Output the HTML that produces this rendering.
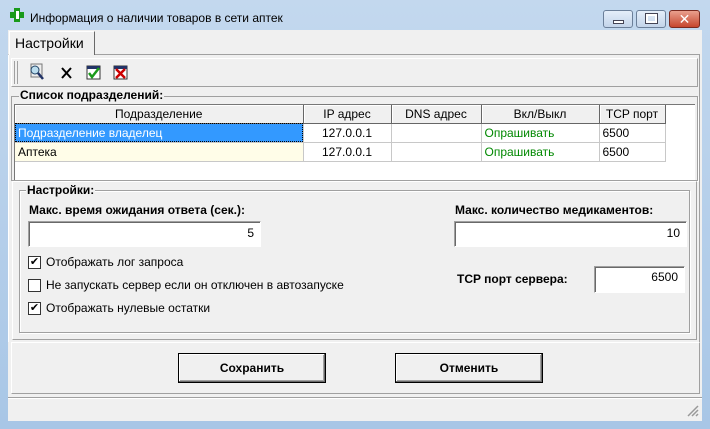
<!DOCTYPE html><html><head><meta charset="utf-8"><style>
*{margin:0;padding:0;box-sizing:border-box}
body{width:710px;height:429px;overflow:hidden;font-family:"Liberation Sans","DejaVu Sans",sans-serif;font-size:12px;color:#000;position:relative;background:linear-gradient(#c3d8ee,#a8c6e6)}
.a{position:absolute}
.b{font-weight:bold}
.in{position:absolute;background:#fff;border:1px solid;border-color:#a0a0a0 #fff #fff #a0a0a0;box-shadow:inset 1px 1px 0 #696969;text-align:right;padding:4px 6px 0 0}
.cb{position:absolute;width:13px;height:13px;background:#fff;border:1px solid #333;font-size:11px;line-height:11px;text-align:center}
.btn{position:absolute;border:1px solid #000;background:#f0f0f0;box-shadow:inset -1px -1px 0 #696969,inset 1px 1px 0 #fff,inset -2px -2px 0 #a0a0a0;font-weight:bold;text-align:center;line-height:28px}
.wb{position:absolute;top:10px;height:18px;border:1px solid #6b7f99;border-radius:3px;background:linear-gradient(#e4eefa,#c3d4ea)}
td{border-right:1px solid #c8c8c8;border-bottom:1px solid #c8c8c8;height:19px;padding:0 3px;white-space:nowrap}
th{font-weight:normal;height:18px;border-right:1px solid #666;border-bottom:1px solid #666;box-shadow:inset 1px 1px 0 #fff;background:#f0f0f0}
</style></head><body>
<div class="a" style="left:10px;top:8px;width:14px;height:14px">
<div class="a" style="left:4px;top:0;width:6px;height:14px;background:#1a9a1a"></div>
<div class="a" style="left:0;top:4px;width:14px;height:6px;background:#1a9a1a"></div>
<div class="a" style="left:6px;top:3px;width:3px;height:8px;background:#fff"></div></div>
<div class="a" style="left:30px;top:11px;font-size:12px">Информация о наличии товаров в сети аптек</div>
<div class="wb" style="left:603px;width:30px"><div class="a" style="left:9px;top:9px;width:11px;height:4px;background:#fff;border:1px solid #445"></div></div>
<div class="wb" style="left:636px;width:30px"><div class="a" style="left:9px;top:3px;width:11px;height:9px;border:2px solid #fff;outline:1px solid #445"></div></div>
<div class="wb" style="left:669px;width:31px;background:linear-gradient(#e9a08e,#c6462e);border-color:#7a2a20;color:#fff;font-weight:bold;text-align:center;font-size:14px;line-height:16px">✕</div>
<div class="a" style="left:8px;top:30px;width:694px;height:391px;background:#f0f0f0"></div>
<div class="a" style="left:8px;top:54px;width:692px;height:288px;border:1px solid #a0a0a0;border-bottom:none;border-left-color:#fff"></div>
<div class="a" style="left:9px;top:31px;width:86px;height:24px;border:1px solid #fff;border-right-color:#696969;border-bottom:none;background:#f0f0f0;font-size:14px;padding:3px 0 0 5px">Настройки</div>
<div class="a" style="left:11px;top:58px;width:687px;height:29px;border:1px solid #fff;border-right-color:#a0a0a0;border-bottom-color:#a0a0a0"></div>
<div class="a" style="left:14px;top:61px;width:4px;height:23px;border-left:1px solid #a0a0a0;border-right:1px solid #a0a0a0"></div>
<svg class="a" style="left:28px;top:63px" width="110" height="20">
<rect x="3" y="1" width="11" height="13" fill="#eee" stroke="#777"/><circle cx="7" cy="7" r="4" fill="#bde" stroke="#246"/><line x1="10" y1="10" x2="15" y2="16" stroke="#236" stroke-width="2.5"/>
<path d="M34 5 L43 15 M43 5 L34 15" stroke="#000" stroke-width="2"/>
<rect x="59" y="3" width="13" height="13" fill="#fff" stroke="#333"/><rect x="59" y="3" width="13" height="3" fill="#236"/><path d="M61 10 L64 14 L71 5" stroke="#1a9a1a" stroke-width="2.5" fill="none"/>
<rect x="86" y="3" width="13" height="13" fill="#fff" stroke="#333"/><rect x="86" y="3" width="13" height="3" fill="#236"/><path d="M88 6 L97 15 M97 6 L88 15" stroke="#c00" stroke-width="2.5"/>
</svg>
<div class="a" style="left:11px;top:96px;width:687px;height:85px;border:1px solid #a0a0a0;box-shadow:1px 1px 0 #fff"></div>
<div class="a b" style="left:19px;top:88px;background:#f0f0f0;padding:0 1px">Список подразделений:</div>
<div class="a" style="left:14px;top:104px;width:681px;height:76px;background:#fff;border-left:1px solid #777;border-top:1px solid #777">
<table cellspacing="0" style="border-collapse:collapse;font-size:12px">
<tr><th style="width:288px">Подразделение</th><th style="width:88px">IP адрес</th><th style="width:90px">DNS адрес</th><th style="width:118px">Вкл/Выкл</th><th style="width:66px">TCP порт</th></tr>
<tr><td style="background:#3399ff;color:#fff;outline:1px dotted #000;outline-offset:-1px">Подразделение владелец</td><td style="text-align:center">127.0.0.1</td><td></td><td style="color:#080">Опрашивать</td><td>6500</td></tr>
<tr><td style="background:#fffde8">Аптека</td><td style="text-align:center">127.0.0.1</td><td></td><td style="color:#080">Опрашивать</td><td>6500</td></tr>
</table></div>
<div class="a" style="left:12px;top:181px;width:685px;height:159px;border:1px solid #fff;border-right-color:#a0a0a0;border-bottom-color:#a0a0a0"></div>
<div class="a" style="left:19px;top:190px;width:671px;height:143px;border:1px solid #a0a0a0;box-shadow:1px 1px 0 #fff,inset 1px 1px 0 #fff"></div>
<div class="a b" style="left:26px;top:183px;background:#f0f0f0;padding:0 1px">Настройки:</div>
<div class="a b" style="left:29px;top:203px">Макс. время ожидания ответа (сек.):</div>
<div class="in" style="left:28px;top:221px;width:233px;height:26px">5</div>
<div class="cb" style="left:28px;top:256px">✔</div><div class="a" style="left:46px;top:255px">Отображать лог запроса</div>
<div class="cb" style="left:28px;top:279px"></div><div class="a" style="left:46px;top:278px">Не запускать сервер если он отключен в автозапуске</div>
<div class="cb" style="left:28px;top:302px">✔</div><div class="a" style="left:46px;top:301px">Отображать нулевые остатки</div>
<div class="a b" style="left:455px;top:203px">Макс. количество медикаментов:</div>
<div class="in" style="left:454px;top:221px;width:233px;height:26px">10</div>
<div class="a b" style="left:457px;top:272px">TCP порт сервера:</div>
<div class="in" style="left:594px;top:266px;width:91px;height:27px;padding-top:3px">6500</div>
<div class="a" style="left:11px;top:342px;width:689px;height:52px;border:1px solid #a0a0a0;border-left-color:#fff;border-top-color:#fff"></div>
<div class="btn" style="left:178px;top:353px;width:148px;height:30px">Сохранить</div>
<div class="btn" style="left:395px;top:353px;width:148px;height:30px">Отменить</div>
<div class="a" style="left:8px;top:397px;width:694px;height:24px;border-top:1px solid #a0a0a0;box-shadow:inset 0 1px 0 #fff"></div>
<svg class="a" style="left:686px;top:404px" width="14" height="14"><path d="M12 2 L2 12 M12 6 L6 12 M12 10 L10 12" stroke="#999" stroke-width="1.5"/></svg>
</body></html>
